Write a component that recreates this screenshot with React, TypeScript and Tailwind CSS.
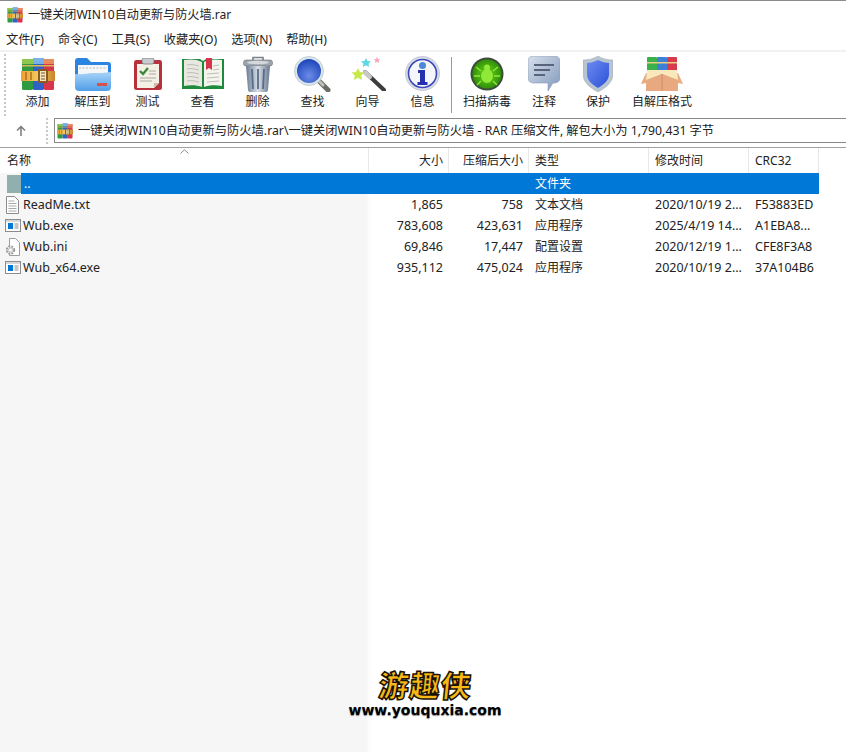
import type { ReactNode } from 'react';

const FONT = "font-['Noto_Sans','Noto_Sans_CJK_SC',sans-serif]";

function RarIcon({ small }: { small?: boolean }) {
  return (
    <svg viewBox="0 0 34 34" className="w-full h-full">
      <defs>
        <linearGradient id={small ? 'sg' : 'lg'} x1="0" x2="1" y1="0" y2="0">
          <stop offset="0" stopColor="#f0a030" />
          <stop offset="0.5" stopColor="#f0c860" />
          <stop offset="1" stopColor="#c88428" />
        </linearGradient>
      </defs>
      <rect x="1" y="2" width="11" height="31" rx="1.5" fill="#2f9a42" />
      <rect x="12" y="1" width="11" height="32" rx="1.5" fill="#2e62c8" />
      <rect x="23" y="2" width="10" height="31" rx="1.5" fill="#d8344c" />
      <rect x="1" y="2" width="11" height="5" fill="#8cc850" />
      <rect x="12" y="1" width="11" height="6" fill="#78b0e8" />
      <rect x="23" y="2" width="10" height="5" fill="#e88c60" />
      <rect x="1" y="8" width="11" height="1.5" fill="#d8b850" />
      <rect x="12" y="8" width="11" height="1.5" fill="#d8b850" />
      <rect x="23" y="8" width="10" height="1.5" fill="#d8b850" />
      <rect x="0" y="14" width="34" height="10" fill={`url(#${small ? 'sg' : 'lg'})`} />
      <rect x="17" y="12" width="10" height="14" rx="1" fill="#8a5a20" />
      <rect x="19" y="14" width="6" height="10" fill="#f4e8c4" />
      <path d="M20 16h4M20 19h4M20 22h4" stroke="#7a5520" strokeWidth="1.2" />
      <path d="M5 15v8M10 15v8" stroke="#a86c20" strokeWidth="1.4" />
    </svg>
  );
}

function FolderIcon() {
  return (
    <svg viewBox="0 0 36 34" className="w-full h-full">
      <defs>
        <linearGradient id="fo" x1="0" x2="0" y1="0" y2="1">
          <stop offset="0" stopColor="#a8d4f8" />
          <stop offset="1" stopColor="#4f9ee8" />
        </linearGradient>
      </defs>
      <path d="M0 4a3 3 0 0 1 3-3h9l4 4h17a3 3 0 0 1 3 3v22H0z" fill="#2a84e0" />
      <rect x="3" y="8" width="30" height="12" fill="#f4f6f8" />
      <path d="M4 11h28" stroke="#b8bcc4" strokeWidth="1.2" strokeDasharray="2 1.5" />
      <path d="M0 17c8 1 12-1 18-1s12 0 18-1v15a4 4 0 0 1-4 4H4a4 4 0 0 1-4-4z" fill="url(#fo)" />
      <rect x="22" y="26" width="10" height="3" fill="#d8504c" />
    </svg>
  );
}

function ClipboardIcon() {
  return (
    <svg viewBox="0 0 28 32" className="w-full h-full">
      <rect x="0" y="2" width="28" height="30" rx="2.5" fill="#b8323c" />
      <path d="M3 6h22v19l-5 5H3z" fill="#f4f0e6" />
      <path d="M20 30l5-5h-5z" fill="#c8c0b0" />
      <rect x="8" y="0" width="12" height="6" rx="2" fill="#c8ccd0" stroke="#7a7a7a" strokeWidth="0.8" />
      <path d="M6 13l3 3 5-6" fill="none" stroke="#3c8a3c" strokeWidth="2.4" />
      <path d="M15 13h7M15 16h7M6 20h16M6 23h12" stroke="#a8a8a0" strokeWidth="1" />
    </svg>
  );
}

function BookIcon() {
  return (
    <svg viewBox="0 0 42 31" className="w-full h-full">
      <path d="M0 1h18l3 2 3-2h18v30H0z" fill="#1f8a3c" />
      <path d="M2 2c6-1 13-1 18 2v25c-5-2-12-2-18-1z" fill="#e8e8e0" />
      <path d="M40 2c-6-1-13-1-18 2v25c5-2 12-2 18-1z" fill="#f4f4ec" />
      <path d="M5 7c4-1 8 0 12 1M5 11c4-1 8 0 12 1M5 15c4-1 8 0 12 1M5 19c4-1 8 0 12 1M5 23c4-1 8 0 12 1M31 8c2 0 4-1 6-1M31 12c2 0 4-1 6-1M25 16c4 0 8-1 12-1M25 20c4 0 8-1 12-1M25 24c4 0 8-1 12-1" stroke="#b8b8b0" strokeWidth="0.9" fill="none" />
      <path d="M24 0h6v12l-3-2-3 2z" fill="#d8344c" />
    </svg>
  );
}

function TrashIcon() {
  return (
    <svg viewBox="0 0 30 36" className="w-full h-full">
      <defs>
        <linearGradient id="tr" x1="0" x2="1" y1="0" y2="0">
          <stop offset="0" stopColor="#6c7c94" />
          <stop offset="0.5" stopColor="#d8dfe8" />
          <stop offset="1" stopColor="#68788c" />
        </linearGradient>
      </defs>
      <path d="M10 4V1.5h10V4" fill="none" stroke="#7c8088" strokeWidth="1.6" />
      <rect x="0.5" y="4" width="29" height="6" rx="2.5" fill="#9ca4ac" stroke="#6c7078" strokeWidth="0.6" />
      <ellipse cx="15" cy="6.5" rx="11" ry="1.8" fill="#d4d8dc" />
      <path d="M3 10h24l-2 24a2 2 0 0 1-2 2H7a2 2 0 0 1-2-2z" fill="url(#tr)" />
      <path d="M9 13l1 20M15 13v20M21 13l-1 20" stroke="#5c6c88" strokeWidth="1.8" />
    </svg>
  );
}

function SearchIcon() {
  return (
    <svg viewBox="0 0 37 36" className="w-full h-full">
      <defs>
        <radialGradient id="se" cx="0.5" cy="0.7" r="0.7">
          <stop offset="0" stopColor="#6c8ce8" />
          <stop offset="1" stopColor="#1c44b8" />
        </radialGradient>
      </defs>
      <path d="M23 23l11 11" stroke="#6c6c64" strokeWidth="5" strokeLinecap="round" />
      <path d="M24 24l5 5" stroke="#c0c0b8" strokeWidth="3" strokeLinecap="round" />
      <circle cx="15" cy="15" r="14.5" fill="#dbe6ea" stroke="#a8b8c0" strokeWidth="0.6" />
      <circle cx="15" cy="15" r="12" fill="url(#se)" />
    </svg>
  );
}

function WandIcon() {
  return (
    <svg viewBox="0 0 36 35" className="w-full h-full">
      <path d="M15 16l19 18" stroke="#3c3c3c" strokeWidth="4" strokeLinecap="round" />
      <path d="M15 16l5 5" stroke="#c8c8c8" strokeWidth="4" strokeLinecap="round" />
      <path d="M8 12l2 4 4.500 .5-3.300 3 .9 4.500-4.100-2.300-4.100 2.300 .9-4.500L1.500 16.500 6 16z" fill="#c8e84c" />
      <path d="M16 2l1.500 3 3.500 .4-2.500 2.300 .7 3.300-3.200-1.700-3.200 1.700 .7-3.300-2.500-2.300 3.500-.4z" fill="#5cd8e8" />
      <path d="M27 1l1 2 2.300 .3-1.700 1.500 .5 2.200-2.100-1.100-2.100 1.100 .5-2.200-1.700-1.500 2.300-.3z" fill="#f8a8c0" />
    </svg>
  );
}

function InfoIcon() {
  return (
    <svg viewBox="0 0 35 35" className="w-full h-full">
      <circle cx="17.500" cy="17.500" r="17" fill="#d8dce8" stroke="#b0b4c0" strokeWidth="0.6" />
      <circle cx="17.500" cy="17.500" r="14" fill="#f4f6fa" stroke="#3c48b8" strokeWidth="1.6" />
      <circle cx="17.500" cy="9.500" r="3.500" fill="#4c88d8" />
      <path d="M13 14h7v12h2.500v3h-10v-3H15v-9h-2z" fill="#2430b0" />
    </svg>
  );
}

function BugIcon() {
  return (
    <svg viewBox="0 0 34 34" className="w-full h-full">
      <defs>
        <radialGradient id="bu" cx="0.5" cy="0.5" r="0.55">
          <stop offset="0" stopColor="#68d818" />
          <stop offset="1" stopColor="#2c8808" />
        </radialGradient>
      </defs>
      <circle cx="17" cy="17" r="16.500" fill="#3c4c3c" />
      <circle cx="17" cy="17" r="14.500" fill="url(#bu)" />
      <ellipse cx="17" cy="19" rx="6" ry="7" fill="#90e838" />
      <circle cx="17" cy="10.500" r="3" fill="#90e838" />
      <path d="M11 14l-5-4M23 14l5-4M10 19H4M24 19h6M11 24l-4 4M23 24l4 4" stroke="#90e838" strokeWidth="1.500" />
    </svg>
  );
}

function CommentIcon() {
  return (
    <svg viewBox="0 0 32 35" className="w-full h-full">
      <defs>
        <linearGradient id="co" x1="0" x2="1" y1="0" y2="1">
          <stop offset="0" stopColor="#d8e0ec" />
          <stop offset="1" stopColor="#8098bc" />
        </linearGradient>
      </defs>
      <path d="M5 0h22a5 5 0 0 1 5 5v17a5 5 0 0 1-5 5h-2l-5 8v-8H5a5 5 0 0 1-5-5V5a5 5 0 0 1 5-5z" fill="url(#co)" stroke="#8c9cb4" strokeWidth="0.6" />
      <path d="M6 9h20M6 14h16M6 19h11" stroke="#58647c" strokeWidth="2.200" />
    </svg>
  );
}

function ShieldIcon() {
  return (
    <svg viewBox="0 0 30 36" className="w-full h-full">
      <defs>
        <linearGradient id="sh" x1="0" x2="1" y1="0" y2="1">
          <stop offset="0" stopColor="#6c8cf0" />
          <stop offset="1" stopColor="#2c50d8" />
        </linearGradient>
      </defs>
      <path d="M15 0c5 3 10 4 15 4v14c0 9-8 14-15 18C8 32 0 27 0 18V4c5 0 10-1 15-4z" fill="#b8c4d0" stroke="#98a4b0" strokeWidth="0.5" />
      <path d="M15 4c4 2 8 3 11 3v11c0 7-6 11-11 14C10 29 4 25 4 18V7c3 0 7-1 11-3z" fill="url(#sh)" />
    </svg>
  );
}

function BoxIcon() {
  return (
    <svg viewBox="0 0 42 34" className="w-full h-full">
      <rect x="6" y="0" width="10" height="14" rx="1" fill="#3cb04c" />
      <rect x="16" y="0" width="10" height="14" rx="1" fill="#3c80d8" />
      <rect x="26" y="0" width="10" height="14" rx="1" fill="#d83c4c" />
      <rect x="6" y="5" width="30" height="1.500" fill="#e8d080" />
      <path d="M5 16L0 27l5-1V34h32v-8l5 1-5-11z" fill="#e8ac80" />
      <path d="M6 13h30l1 10-16-6-16 6z" fill="#f8e8bc" />
      <path d="M6 23l15-6 15 6v11H6z" fill="#e8a880" />
      <path d="M21 17v17" stroke="#c08860" strokeWidth="0.8" />
    </svg>
  );
}

function TxtIcon() {
  return (
    <svg viewBox="0 0 13 18" className="w-[13px] h-[18px]">
      <path d="M.5.500h8l4 4v13H.500z" fill="#fff" stroke="#8c8c8c" />
      <path d="M2.500 5h6M2.500 7.500h8M2.500 10h8M2.500 12.500h8M2.500 15h8" stroke="#a8a8a8" />
    </svg>
  );
}

function ExeIcon() {
  return (
    <svg viewBox="0 0 16 13" className="w-4 h-[13px]">
      <rect x=".5" y=".5" width="15" height="12" fill="#fff" stroke="#8c8c8c" />
      <rect x="1" y="1" width="14" height="2" fill="#d8d8d8" />
      <rect x="3" y="4" width="5" height="6" fill="#0078d7" />
      <path d="M9.500 5h4M9.500 7h4M9.500 9h4" stroke="#8c8c8c" />
    </svg>
  );
}

function IniIcon() {
  return (
    <svg viewBox="0 0 15 18" className="w-[15px] h-[18px]">
      <path d="M4.500.500h6l4 4v13h-10z" fill="#fff" stroke="#9c9c9c" />
      <circle cx="5.500" cy="12" r="3.500" fill="none" stroke="#9c9c9c" strokeWidth="2.400" strokeDasharray="1.800 1" />
      <circle cx="5.500" cy="12" r="2.800" fill="#d0d0d0" />
      <circle cx="5.500" cy="12" r="1.300" fill="#fff" />
    </svg>
  );
}

const tools: { label: string; w: string; iw: string; icon: ReactNode }[] = [
  { label: '添加', w: 'w-[55px]', iw: 'w-[34px] h-[34px]', icon: <RarIcon /> },
  { label: '解压到', w: 'w-[55px]', iw: 'w-[36px] h-[34px]', icon: <FolderIcon /> },
  { label: '测试', w: 'w-[55px]', iw: 'w-[28px] h-[32px]', icon: <ClipboardIcon /> },
  { label: '查看', w: 'w-[55px]', iw: 'w-[42px] h-[31px]', icon: <BookIcon /> },
  { label: '删除', w: 'w-[55px]', iw: 'w-[30px] h-[36px]', icon: <TrashIcon /> },
  { label: '查找', w: 'w-[55px]', iw: 'w-[37px] h-[36px]', icon: <SearchIcon /> },
  { label: '向导', w: 'w-[55px]', iw: 'w-[36px] h-[35px]', icon: <WandIcon /> },
  { label: '信息', w: 'w-[55px]', iw: 'w-[35px] h-[35px]', icon: <InfoIcon /> },
];

const tools2: { label: string; w: string; iw: string; icon: ReactNode }[] = [
  { label: '扫描病毒', w: 'w-[60px]', iw: 'w-[34px] h-[34px]', icon: <BugIcon /> },
  { label: '注释', w: 'w-[54px]', iw: 'w-[32px] h-[35px]', icon: <CommentIcon /> },
  { label: '保护', w: 'w-[54px]', iw: 'w-[30px] h-[36px]', icon: <ShieldIcon /> },
  { label: '自解压格式', w: 'w-[74px]', iw: 'w-[42px] h-[34px]', icon: <BoxIcon /> },
];

const menus = ['文件(F)', '命令(C)', '工具(S)', '收藏夹(O)', '选项(N)', '帮助(H)'];

const files = [
  { name: 'ReadMe.txt', size: '1,865', packed: '758', type: '文本文档', time: '2020/10/19 2...', crc: 'F53883ED', icon: <TxtIcon /> },
  { name: 'Wub.exe', size: '783,608', packed: '423,631', type: '应用程序', time: '2025/4/19 14...', crc: 'A1EBA8...', icon: <ExeIcon /> },
  { name: 'Wub.ini', size: '69,846', packed: '17,447', type: '配置设置', time: '2020/12/19 1...', crc: 'CFE8F3A8', icon: <IniIcon /> },
  { name: 'Wub_x64.exe', size: '935,112', packed: '475,024', type: '应用程序', time: '2020/10/19 2...', crc: '37A104B6', icon: <ExeIcon /> },
];

const cols = 'grid grid-cols-[369px_80px_80px_120px_100px_70px] w-[819px]';

function ToolButton({ label, w, iw, icon }: { label: string; w: string; iw: string; icon: ReactNode }) {
  return (
    <div className={`${w} flex flex-col items-center`}>
      <div className="h-[37px] flex items-center justify-center">
        <div className={iw}>{icon}</div>
      </div>
      <span className="mt-[1px] text-[12px] leading-[18px] text-[#222] whitespace-nowrap">{label}</span>
    </div>
  );
}

export default function App() {
  return (
    <div className={`relative w-[846px] h-[752px] overflow-hidden flex flex-col bg-white text-[12px] text-[#222] ${FONT}`}>
      {/* title bar */}
      <div className="h-[29px] border-t border-[#8a8a8a] flex items-center pl-[7px] gap-[5px] bg-white shrink-0">
        <div className="w-4 h-4"><RarIcon small /></div>
        <span className="pt-[1px] text-[12.1px] text-[#222]">一键关闭WIN10自动更新与防火墙.rar</span>
      </div>

      {/* menu */}
      <div className="h-[21px] flex items-center pl-[6px] pt-[2px] gap-[14px] bg-white shrink-0">
        {menus.map((m) => (
          <span key={m} className="text-[12.2px] text-[#222]">{m}</span>
        ))}
      </div>

      {/* toolbar */}
      <div className="h-[68px] flex pt-[3px] pl-[10px] bg-white border-t-2 border-[#f1f1f1] shrink-0 relative">
        <div className="absolute left-[4px] top-[2px] bottom-[2px] border-l-2 border-dotted border-[#c8c8c8]" />
        {tools.map((t) => <ToolButton key={t.label} {...t} />)}
        <div className="ml-[1px] mr-[5px] mt-[2px] h-[56px] border-l border-[#9a9a9a] w-[1px]" />
        {tools2.map((t) => <ToolButton key={t.label} {...t} />)}
      </div>

      {/* address */}
      <div className="h-[29px] flex bg-white shrink-0">
        <div className="w-[42px] h-[26px] flex items-center justify-center text-[#7a7a7a]">
          <svg viewBox="0 0 12 12" className="w-3 h-3">
            <path d="M6 11V2M2 5.500L6 1.500l4 4" fill="none" stroke="currentColor" strokeWidth="1.500" />
          </svg>
        </div>
        <div className="w-[8px] h-[26px] ml-[4px] border-l-2 border-dotted border-[#c8c8c8]" />
        <div className="flex-1 h-[25px] border border-r-0 border-[#8a8a8a] flex items-center pl-[2px] gap-[5px]">
          <div className="w-4 h-4"><RarIcon small /></div>
          <span className="pt-[2px] whitespace-nowrap text-[12.25px] text-[#222]">一键关闭WIN10自动更新与防火墙.rar\一键关闭WIN10自动更新与防火墙 - RAR 压缩文件, 解包大小为 1,790,431 字节</span>
        </div>
      </div>

      {/* list */}
      <div className="flex-1 border-t border-[#a0a0a0] bg-[linear-gradient(to_right,#f6f6f6_366px,#fcfcfc_369px,#ffffff_372px)] relative">
        <svg viewBox="0 0 9 5" className="absolute left-[180px] top-[1px] w-[9px] h-[5px]">
          <path d="M.5 4.500L4.500 .8l4 3.700" fill="none" stroke="#8a8a8a" />
        </svg>
        <div className="w-full bg-white">
          <div className={`${cols} h-[25px] items-center`}>
            <div className="h-full pl-[7px] flex items-center border-r border-[#e8e8e8]">名称</div>
            <div className="h-full pr-[5px] flex items-center justify-end border-r border-[#e8e8e8]">大小</div>
            <div className="h-full pr-[5px] flex items-center justify-end border-r border-[#e8e8e8]">压缩后大小</div>
            <div className="h-full pl-[6px] flex items-center border-r border-[#e8e8e8]">类型</div>
            <div className="h-full pl-[6px] flex items-center border-r border-[#e8e8e8]">修改时间</div>
            <div className="h-full pl-[6px] flex items-center border-r border-[#e8e8e8]">CRC32</div>
          </div>
        </div>

        {/* parent folder row */}
        <div className={`${cols} h-[21px] items-center relative`}>
          <div className="flex items-center h-full pl-[7px]">
            <div className="w-[14px] h-[18px] bg-[#8fb0ae]" />
            <div className="flex-1 h-full bg-[#0078d7] text-white flex items-center pl-[3px] pt-[1px]">..</div>
          </div>
          <div className="h-full bg-[#0078d7]" />
          <div className="h-full bg-[#0078d7]" />
          <div className="h-full bg-[#0078d7] text-white pl-[6px] pt-[1px] flex items-center">文件夹</div>
          <div className="h-full bg-[#0078d7]" />
          <div className="h-full bg-[#0078d7]" />
        </div>

        {files.map((f) => (
          <div key={f.name} className={`${cols} h-[21px] items-center text-[12.5px]`}>
            <div className="flex items-center h-full">
              <div className="w-[23px] flex items-center justify-center pl-[3px] pr-[1px] shrink-0">{f.icon}</div>
              <span className="pt-[2px]">{f.name}</span>
            </div>
            <div className="text-right pr-[6px] pt-[2px]">{f.size}</div>
            <div className="text-right pr-[6px] pt-[2px]">{f.packed}</div>
            <div className="pl-[6px] pt-[1px] text-[12px]">{f.type}</div>
            <div className="pl-[6px] pt-[2px] whitespace-nowrap">{f.time}</div>
            <div className="pl-[6px] pt-[2px] whitespace-nowrap">{f.crc}</div>
          </div>
        ))}
      </div>

      {/* watermark */}
      <div className="absolute left-[349px] top-[667px] w-[152px] flex flex-col items-center">
        <span className="-skew-x-6 text-[30px] leading-[35px] font-black tracking-[1px] text-[#f8b818] [-webkit-text-stroke:1.5px_#1a1204] font-['Noto_Sans_CJK_SC',sans-serif]">游趣侠</span>
        <span className="mt-[1px] text-[14px] leading-[15px] font-bold text-black whitespace-nowrap [text-shadow:0_1px_1px_#888] font-['DejaVu_Sans',sans-serif]">www.youquxia.com</span>
      </div>
    </div>
  );
}
